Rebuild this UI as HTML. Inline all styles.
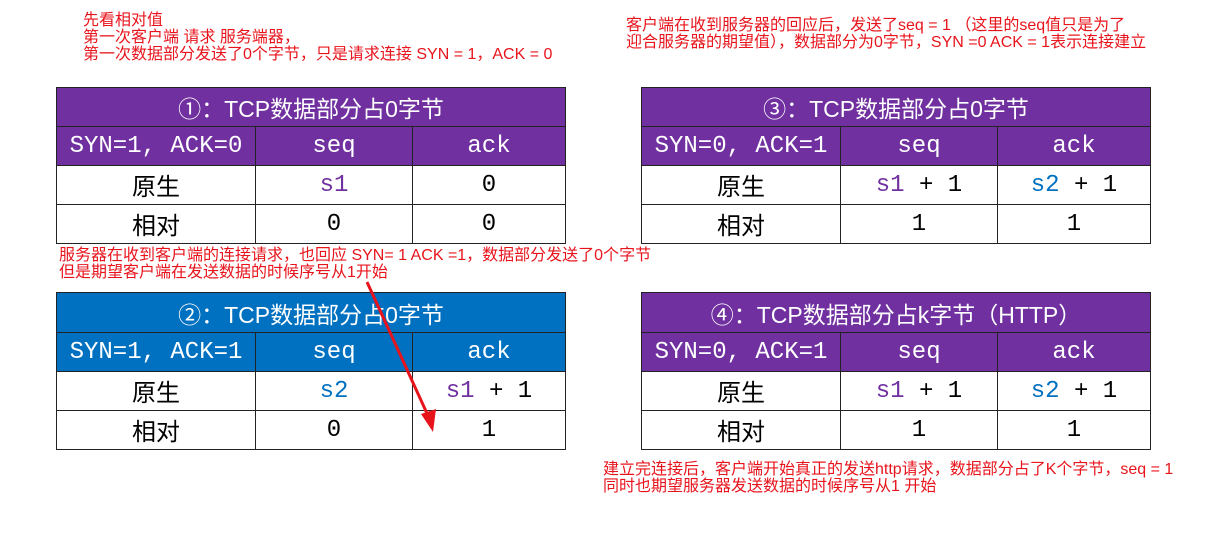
<!DOCTYPE html><html><head><meta charset="utf-8"><style>
body{margin:0;width:1205px;height:537px;background:#fff;position:relative;overflow:hidden;font-family:"Liberation Sans","Noto Sans CJK SC",sans-serif}
.n{position:absolute;color:#e8141c;font-size:16px;line-height:17px;white-space:nowrap}
table{position:absolute;border-collapse:collapse;font-family:"Liberation Mono","Noto Sans CJK SC",monospace;font-size:24px}
td{border:1.5px solid #222;text-align:center;padding:0;height:38px}
td.tt{font-family:"Liberation Sans","Noto Sans CJK SC",sans-serif;font-size:23px}
.p td.h{background:#7030a0;color:#fff}
.b td.h{background:#0070c0;color:#fff}
.pu{color:#7030a0}.bl{color:#0070c0}
</style></head><body>
<div class="n" style="left:83px;top:12px">先看相对值<br>第一次客户端 请求 服务端器，<br>第一次数据部分发送了0个字节，只是请求连接 SYN = 1，ACK = 0</div>
<div class="n" style="left:626px;top:17px">客户端在收到服务器的回应后，发送了seq = 1 （这里的seq值只是为了<br>迎合服务器的期望值），数据部分为0字节，SYN =0 ACK = 1表示连接建立</div>
<div class="n" style="left:59px;top:247px">服务器在收到客户端的连接请求，也回应 SYN= 1 ACK =1，数据部分发送了0个字节<br>但是期望客户端在发送数据的时候序号从1开始</div>
<div class="n" style="left:603px;top:461px">建立完连接后，客户端开始真正的发送http请求，数据部分占了K个字节，seq = 1<br>同时也期望服务器发送数据的时候序号从1 开始</div>

<table class="p" style="left:56px;top:87px;width:510px"><tr><td class="h tt" colspan="3" style="height:38px">①：TCP数据部分占0字节</td></tr>
<tr><td class="h" style="width:198px">SYN=1, ACK=0</td><td class="h" style="width:156px">seq</td><td class="h">ack</td></tr>
<tr><td>原生</td><td class="pu">s1</td><td>0</td></tr><tr><td>相对</td><td>0</td><td>0</td></tr></table>

<table class="p" style="left:641px;top:87px;width:510px"><tr><td class="h tt" colspan="3" style="height:38px">③：TCP数据部分占0字节</td></tr>
<tr><td class="h" style="width:198px">SYN=0, ACK=1</td><td class="h" style="width:156px">seq</td><td class="h">ack</td></tr>
<tr><td>原生</td><td><span class="pu">s1</span> + 1</td><td><span class="bl">s2</span> + 1</td></tr><tr><td>相对</td><td>1</td><td>1</td></tr></table>

<table class="b" style="left:56px;top:292px;width:510px"><tr><td class="h tt" colspan="3" style="height:39px">②：TCP数据部分占0字节</td></tr>
<tr><td class="h" style="width:198px">SYN=1, ACK=1</td><td class="h" style="width:156px">seq</td><td class="h">ack</td></tr>
<tr><td>原生</td><td class="bl">s2</td><td><span class="pu">s1</span> + 1</td></tr><tr><td>相对</td><td>0</td><td>1</td></tr></table>

<table class="p" style="left:641px;top:292px;width:510px"><tr><td class="h tt" colspan="3" style="height:39px">④：TCP数据部分占k字节（HTTP）</td></tr>
<tr><td class="h" style="width:198px">SYN=0, ACK=1</td><td class="h" style="width:156px">seq</td><td class="h">ack</td></tr>
<tr><td>原生</td><td><span class="pu">s1</span> + 1</td><td><span class="bl">s2</span> + 1</td></tr><tr><td>相对</td><td>1</td><td>1</td></tr></table>

<svg style="position:absolute;left:0;top:0" width="1205" height="537"><line x1="367" y1="282" x2="430" y2="420" stroke="#e8141c" stroke-width="3"/><polygon points="433,432 421,414 436,409" fill="#e8141c"/></svg>
</body></html>
